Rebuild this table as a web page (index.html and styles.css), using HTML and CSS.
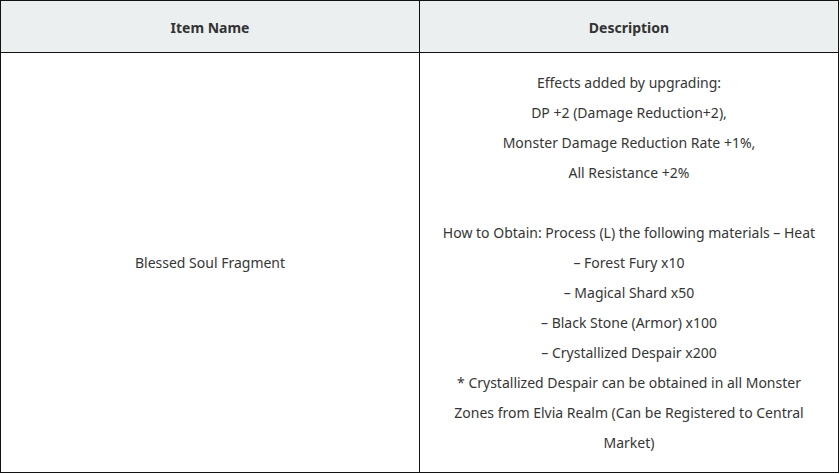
FILE: index.html
```html
<!DOCTYPE html>
<html>
<head>
<meta charset="utf-8">
<link rel="stylesheet" href="styles.css">
</head>
<body>
<table class="items">
  <thead>
    <tr>
      <th class="col-name">Item Name</th>
      <th class="col-desc">Description</th>
    </tr>
  </thead>
  <tbody>
    <tr>
      <td class="name">Blessed Soul Fragment</td>
      <td class="desc">Effects added by upgrading:<br>DP +2 (Damage Reduction+2),<br>Monster Damage Reduction Rate +1%,<br>All Resistance +2%<br><br>How to Obtain: Process (L) the following materials – Heat<br>– Forest Fury x10<br>– Magical Shard x50<br>– Black Stone (Armor) x100<br>– Crystallized Despair x200<br>* Crystallized Despair can be obtained in all Monster<br>Zones from Elvia Realm (Can be Registered to Central<br>Market)</td>
    </tr>
  </tbody>
</table>
</body>
</html>
```
FILE: styles.css
```css
html, body {
  margin: 0;
  padding: 0;
  background: #ffffff;
}

.items {
  border-collapse: collapse;
  width: 839px;
  font-family: "Noto Sans", "Open Sans", sans-serif;
  font-size: 14px;
  color: #363636;
}

.items th,
.items td {
  border: 1px solid #111111;
  text-align: center;
  vertical-align: middle;
}

.items th {
  background: #eceff0;
  height: 49px;
  padding: 2px 0 0;
  font-weight: 700;
  color: #333333;
}

.col-name {
  width: 418px;
}

.items td {
  padding: 15px 10px 14px;
  line-height: 30px;
  white-space: nowrap;
}
```
